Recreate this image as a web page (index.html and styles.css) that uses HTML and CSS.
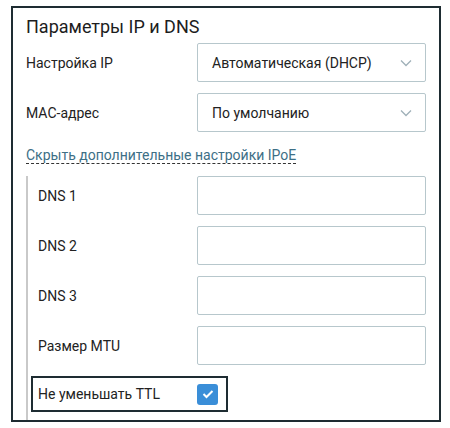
FILE: index.html
```html
<!DOCTYPE html>
<html lang="ru">
<head>
<meta charset="utf-8">
<link rel="stylesheet" href="styles.css">
</head>
<body>
<div class="frame">
  <div class="title">Параметры IP и DNS</div>
  <div class="row">
    <div class="label">Настройка IP</div>
    <div class="field select"><span>Автоматическая (DHCP)</span>
      <svg class="chev" width="12" height="8" viewBox="0 0 12 8"><path d="M1 1.5 L6 6.5 L11 1.5" fill="none" stroke="#9fb0b8" stroke-width="1.3"/></svg>
    </div>
  </div>
  <div class="row">
    <div class="label">MAC-адрес</div>
    <div class="field select"><span>По умолчанию</span>
      <svg class="chev" width="12" height="8" viewBox="0 0 12 8"><path d="M1 1.5 L6 6.5 L11 1.5" fill="none" stroke="#9fb0b8" stroke-width="1.3"/></svg>
    </div>
  </div>
  <div class="linkline"><span class="link">Скрыть дополнительные настройки IPoE</span></div>
  <div class="section">
    <div class="row sub">
      <div class="label">DNS 1</div>
      <div class="field"></div>
    </div>
    <div class="row sub">
      <div class="label">DNS 2</div>
      <div class="field"></div>
    </div>
    <div class="row sub">
      <div class="label">DNS 3</div>
      <div class="field"></div>
    </div>
    <div class="row sub">
      <div class="label">Размер MTU</div>
      <div class="field"></div>
    </div>
    <div class="checkrow">
      <span class="label">Не уменьшать TTL</span>
      <span class="checkbox"><svg width="12" height="10" viewBox="0 0 12 10"><path d="M1.5 5 L4.5 8 L10.5 2" fill="none" stroke="#fff" stroke-width="2"/></svg></span>
    </div>
  </div>
</div>
</body>
</html>
```
FILE: styles.css
```css
html, body {
  margin: 0;
  padding: 0;
  background: #fff;
}
body {
  font-family: Roboto, "Liberation Sans", sans-serif;
  color: #222;
  width: 450px;
  height: 428px;
  overflow: hidden;
}
.frame {
  margin: 6px 0 0 11px;
  width: 430px;
  height: 416px;
  box-sizing: border-box;
  border: 2px solid #1e2c32;
  padding: 7px 13px 0 13px;
  overflow: hidden;
}
.title {
  font-size: 18px;
  line-height: 24px;
  margin-bottom: 4px;
  color: #1d1d1d;
}
.row {
  display: grid;
  grid-template-columns: 171px 1fr;
  align-items: center;
  height: 39px;
  margin-bottom: 11px;
}
.row.sub {
  grid-template-columns: 159px 1fr;
}
.label {
  font-size: 14px;
  color: #222;
}
.field {
  box-sizing: border-box;
  height: 39px;
  border: 1px solid #b7c7cc;
  border-radius: 2px;
}
.select {
  display: flex;
  align-items: center;
  justify-content: space-between;
  padding: 0 13px 0 14px;
  font-size: 14px;
}
.linkline {
  margin-top: -1px;
  padding-top: 3px;
  height: 31px;
  font-size: 14px;
  line-height: 20px;
}
.link {
  color: #3d6f86;
  border-bottom: 1px dashed #333;
}
.section {
  border-left: 2px solid #c9c9c9;
  padding-left: 10px;
  padding-top: 0;
  height: 260px;
}
.checkrow {
  margin-left: -7px;
  margin-top: 1px;
  width: 197px;
  height: 36px;
  box-sizing: border-box;
  border: 2px solid #1e2c32;
  display: flex;
  align-items: center;
  justify-content: space-between;
  padding: 0 8px 0 5px;
}
.checkbox {
  width: 21px;
  height: 21px;
  border-radius: 3px;
  background: #3a8ed8;
  display: flex;
  align-items: center;
  justify-content: center;
}
```
